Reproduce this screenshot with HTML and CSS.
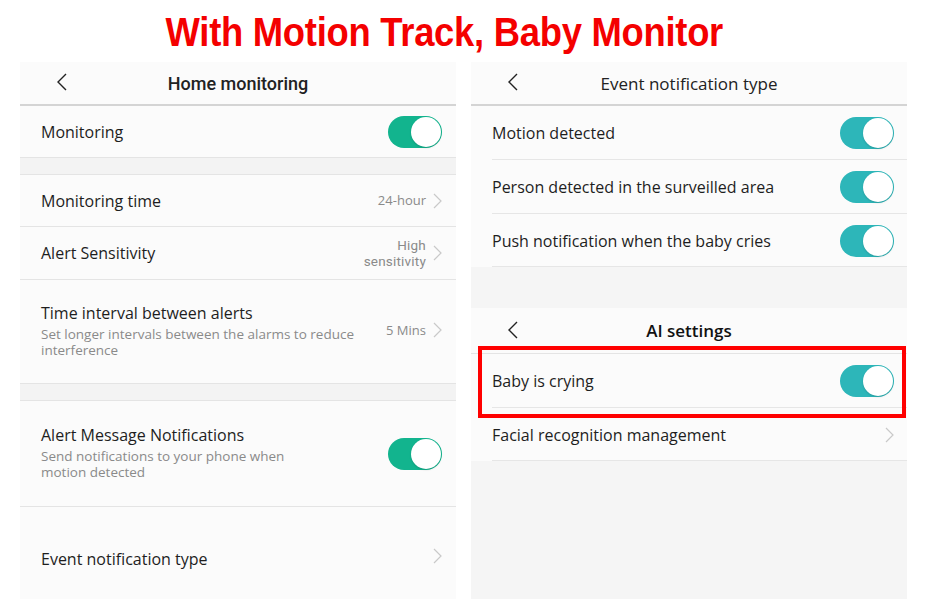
FILE: index.html
```html
<!DOCTYPE html>
<html>
<head>
<meta charset="utf-8">
<link rel="stylesheet" href="styles.css">
</head>
<body>
<h1 class="title"><span>With Motion Track, Baby Monitor</span></h1>
<div class="panels">
  <section class="panel">
    <header class="nav">
      <svg class="back" width="12" height="18" viewBox="0 0 12 18"><path d="M10 1 L2 9 L10 17" fill="none" stroke="#222" stroke-width="1.4"/></svg>
      <span class="nav-title medium">Home monitoring</span>
    </header>
    <div class="row h52">
      <span class="label">Monitoring</span>
      <span class="toggle green"><span class="knob"></span></span>
    </div>
    <div class="gap g16"></div>
    <div class="row h52">
      <span class="label">Monitoring time</span>
      <span class="value">24-hour</span>
      <svg class="chev" width="9" height="16" viewBox="0 0 9 16"><path d="M1 1 L8 8 L1 15" fill="none" stroke="#c9c9c9" stroke-width="1.2"/></svg>
    </div>
    <div class="row h53">
      <span class="label">Alert Sensitivity</span>
      <span class="value two">High<br>sensitivity</span>
      <svg class="chev" width="9" height="16" viewBox="0 0 9 16"><path d="M1 1 L8 8 L1 15" fill="none" stroke="#c9c9c9" stroke-width="1.2"/></svg>
    </div>
    <div class="row tall1">
      <div class="text">
        <div class="label">Time interval between alerts</div>
        <div class="sub">Set longer intervals between the alarms to reduce interference</div>
      </div>
      <span class="value">5 Mins</span>
      <svg class="chev" width="9" height="16" viewBox="0 0 9 16"><path d="M1 1 L8 8 L1 15" fill="none" stroke="#c9c9c9" stroke-width="1.2"/></svg>
    </div>
    <div class="gap g16"></div>
    <div class="row tall2">
      <div class="text narrow">
        <div class="label">Alert Message Notifications</div>
        <div class="sub">Send notifications to your phone when motion detected</div>
      </div>
      <span class="toggle green"><span class="knob"></span></span>
    </div>
    <div class="row last">
      <span class="label">Event notification type</span>
      <svg class="chev" width="9" height="16" viewBox="0 0 9 16"><path d="M1 1 L8 8 L1 15" fill="none" stroke="#c9c9c9" stroke-width="1.2"/></svg>
    </div>
  </section>

  <section class="panel right">
    <header class="nav">
      <svg class="back" width="12" height="18" viewBox="0 0 12 18"><path d="M10 1 L2 9 L10 17" fill="none" stroke="#222" stroke-width="1.4"/></svg>
      <span class="nav-title">Event notification type</span>
    </header>
    <div class="row h54 inset">
      <span class="label">Motion detected</span>
      <span class="toggle teal"><span class="knob"></span></span>
    </div>
    <div class="row h54 inset">
      <span class="label">Person detected in the surveilled area</span>
      <span class="toggle teal"><span class="knob"></span></span>
    </div>
    <div class="row h53 inset">
      <span class="label">Push notification when the baby cries</span>
      <span class="toggle teal"><span class="knob"></span></span>
    </div>
    <div class="gap g41"></div>
    <header class="nav ai">
      <svg class="back" width="12" height="18" viewBox="0 0 12 18"><path d="M10 1 L2 9 L10 17" fill="none" stroke="#222" stroke-width="1.4"/></svg>
      <span class="nav-title bold">AI settings</span>
    </header>
    <div class="highlight-wrap">
      <div class="row h54 inset">
        <span class="label">Baby is crying</span>
        <span class="toggle teal"><span class="knob"></span></span>
      </div>
      <div class="highlight"></div>
    </div>
    <div class="row h53 inset">
      <span class="label">Facial recognition management</span>
      <svg class="chev" width="9" height="16" viewBox="0 0 9 16"><path d="M1 1 L8 8 L1 15" fill="none" stroke="#c9c9c9" stroke-width="1.2"/></svg>
    </div>
    <div class="fill"></div>
  </section>
</div>
</body>
</html>
```

FILE: styles.css
```css
* { box-sizing: border-box; }
html, body { margin: 0; padding: 0; background: #fff; }
body {
  width: 930px;
  height: 599px;
  overflow: hidden;
  font-family: "Open Sans", Roboto, sans-serif;
  color: #1e1e1e;
}
.title {
  margin: 0;
  height: 62px;
  display: flex;
  justify-content: center;
  align-items: center;
  padding-top: 2px;
  padding-right: 42px;
}
.title span {
  display: inline-block;
  font-family: "Liberation Sans", Arial, sans-serif;
  font-weight: bold;
  font-size: 40px;
  color: #f40000;
  transform: scaleX(0.91);
  letter-spacing: -0.3px;
  white-space: nowrap;
}
.panels {
  display: flex;
  gap: 15px;
  padding-left: 20px;
  height: 537px;
}
.panel {
  width: 436px;
  background: #fbfbfb;
  display: flex;
  flex-direction: column;
}
.nav {
  height: 44px;
  flex: none;
  position: relative;
  display: flex;
  align-items: center;
  justify-content: center;
  border-bottom: 2px solid #d4d4d4;
  background: #fbfbfb;
}
.nav .back {
  position: absolute;
  left: 36px;
  top: 11px;
}
.nav-title { font-size: 17px; color: #222; }
.nav-title.medium { font-family: Roboto, sans-serif; font-weight: 500; font-size: 18px; color: #222; }
.nav-title.bold { font-weight: 600; font-size: 17px; color: #111; }
.row {
  display: flex;
  align-items: center;
  padding: 0 14px 0 21px;
  border-bottom: 1px solid #e4e4e4;
  background: #fbfbfb;
  flex: none;
}
.h52 { height: 52px; }
.h53 { height: 53px; }
.h54 { height: 54px; }
.tall1 { height: 104px; padding-bottom: 3px; }
.tall2 { height: 106px; padding-bottom: 4px; }
.last { border-bottom: none; flex: 1; align-items: flex-start; padding-top: 41px; }
.label { font-size: 16px; color: #1e1e1e; }
.row > .label { flex: 1; }
.text { flex: 1; }
.text .label { margin-bottom: 2px; }
.sub { font-size: 13.5px; color: #8a8a8a; line-height: 16px; padding-right: 14px; }
.text.narrow .sub { max-width: 270px; }
.tall2 .toggle { margin-top: 4px; }
.value {
  font-size: 13px;
  color: #8a8a8a;
  text-align: right;
  line-height: 15px;
  margin-right: 7px;
}
.value.two { font-family: Roboto, sans-serif; line-height: 16px; font-size: 13.5px; letter-spacing: 0.2px; }
.chev { flex: none; }
.toggle {
  width: 54px;
  height: 32px;
  border-radius: 16px;
  flex: none;
  display: flex;
  justify-content: flex-end;
  align-items: center;
  padding: 1px;
}
.toggle.green { background: #12b48e; }
.toggle.teal { background: #2db6b9; }
.knob {
  width: 30px;
  height: 30px;
  border-radius: 50%;
  background: #fff;
  box-shadow: 0 1px 2px rgba(0,0,0,0.15);
}
.panel.right .row { padding-right: 13px; padding-left: 21px; }
.inset {
  border-bottom: none;
  background-image: linear-gradient(#e6e6e6, #e6e6e6);
  background-size: calc(100% - 21px) 1px;
  background-position: right bottom;
  background-repeat: no-repeat;
}
.gap { background: #f3f3f3; border-bottom: 1px solid #e4e4e4; flex: none; }
.g16 { height: 17px; }
.g41 { height: 41px; background: #f5f5f5; border-bottom: none; }
.nav.ai { height: 46px; border-bottom: 1px solid #e4e4e4; }
.nav.ai .back { top: 13px; }
.highlight-wrap { position: relative; }
.highlight {
  position: absolute;
  left: 7px;
  right: 1px;
  top: -8px;
  bottom: -10px;
  border: 4px solid #ff0000;
  pointer-events: none;
}
.fill { flex: 1; background: #f5f5f5; }
```
